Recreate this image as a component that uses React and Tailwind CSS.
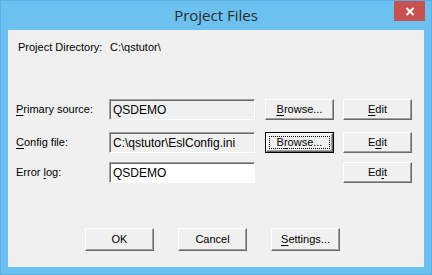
// App.jsx
import React from "react";

const sans = "font-['Liberation_Sans',Arial,sans-serif]";

function Btn({ children, focused = false, tall = false }) {
    return (
        <div className={`w-[69px] ${tall ? "h-[23px]" : "h-[21px]"} text-[11px] text-black ${focused ? "border border-black" : ""}`}>
            <div className="flex items-center justify-center w-full h-full bg-[#f0f0f0] border border-t-white border-l-white border-r-[#696969] border-b-[#696969] shadow-[inset_-1px_-1px_0_#a0a0a0] p-[2px]">
                {focused ? (
                    <span className="flex items-center justify-center w-full h-full border border-dotted border-black">{children}</span>
                ) : (
                    children
                )}
            </div>
        </div>
    );
}

function Field({ value, white = false }) {
    return (
        <div
            className={`w-[146px] h-[21px] flex items-center pl-[3px] text-[12px] text-black border border-t-[#a0a0a0] border-l-[#a0a0a0] border-b-white border-r-white shadow-[inset_1px_1px_0_#696969] ${white ? "bg-white" : "bg-[#f0f0f0]"}`}
        >
            {value}
        </div>
    );
}

const U = ({ children }) => <span className="underline underline-offset-[2px]">{children}</span>;

function Row({ label, value, white, browse, edit }) {
    return (
        <div className="flex items-center h-[21px] pl-[8px]">
            <div className="w-[93px] text-[11px] text-black">{label}</div>
            <Field value={value} white={white} />
            <div className="w-[10px]" />
            <div className="w-[69px]">{browse}</div>
            <div className="w-[9px]" />
            {edit}
        </div>
    );
}

export default function App() {
    return (
        <div className={`w-[432px] h-[275px] bg-[#6bc1f0] border border-[#5aaee3] flex flex-col ${sans}`}>
            {/* Title bar */}
            <div className="relative h-[29px] flex items-center justify-center">
                <span className="text-[15px] text-[#2b2b2b] font-['Open_Sans','Noto_Sans',sans-serif] mt-[-1px]">Project Files</span>
                <div className="absolute top-0 right-[6px] w-[31px] h-[20px] bg-[#c75050] flex items-center justify-center">
                    <svg width="10" height="9" viewBox="0 0 10 9">
                        <path d="M1.5 1 L8.5 8 M8.5 1 L1.5 8" stroke="white" strokeWidth="2" />
                    </svg>
                </div>
            </div>

            {/* Client area */}
            <div className="mx-[7px] w-[416px] h-[237px] bg-[#f0f0f0] flex flex-col">
                <div className="flex items-center h-[13px] mt-[11px] pl-[10px] text-[11px] text-black">
                    <div className="w-[92px]">Project Directory:</div>
                    <div>C:\qstutor\</div>
                </div>

                <div className="mt-[45px]">
                    <Row
                        label={<><U>P</U>rimary source:</>}
                        value="QSDEMO"
                        browse={<Btn><U>B</U>rowse...</Btn>}
                        edit={<Btn><U>E</U>dit</Btn>}
                    />
                </div>
                <div className="mt-[12px]">
                    <Row
                        label={<><U>C</U>onfig file:</>}
                        value="C:\qstutor\EslConfig.ini"
                        browse={<Btn focused>B<U>r</U>owse...</Btn>}
                        edit={<Btn>E<U>d</U>it</Btn>}
                    />
                </div>
                <div className="mt-[9px]">
                    <Row
                        label={<>Error <U>l</U>og:</>}
                        value="QSDEMO"
                        white
                        browse={null}
                        edit={<Btn>Ed<U>i</U>t</Btn>}
                    />
                </div>

                <div className="flex mt-[45px] pl-[77px] gap-[24px]">
                    <Btn tall>OK</Btn>
                    <Btn tall>Cancel</Btn>
                    <Btn tall><U>S</U>ettings...</Btn>
                </div>
            </div>
        </div>
    );
}
